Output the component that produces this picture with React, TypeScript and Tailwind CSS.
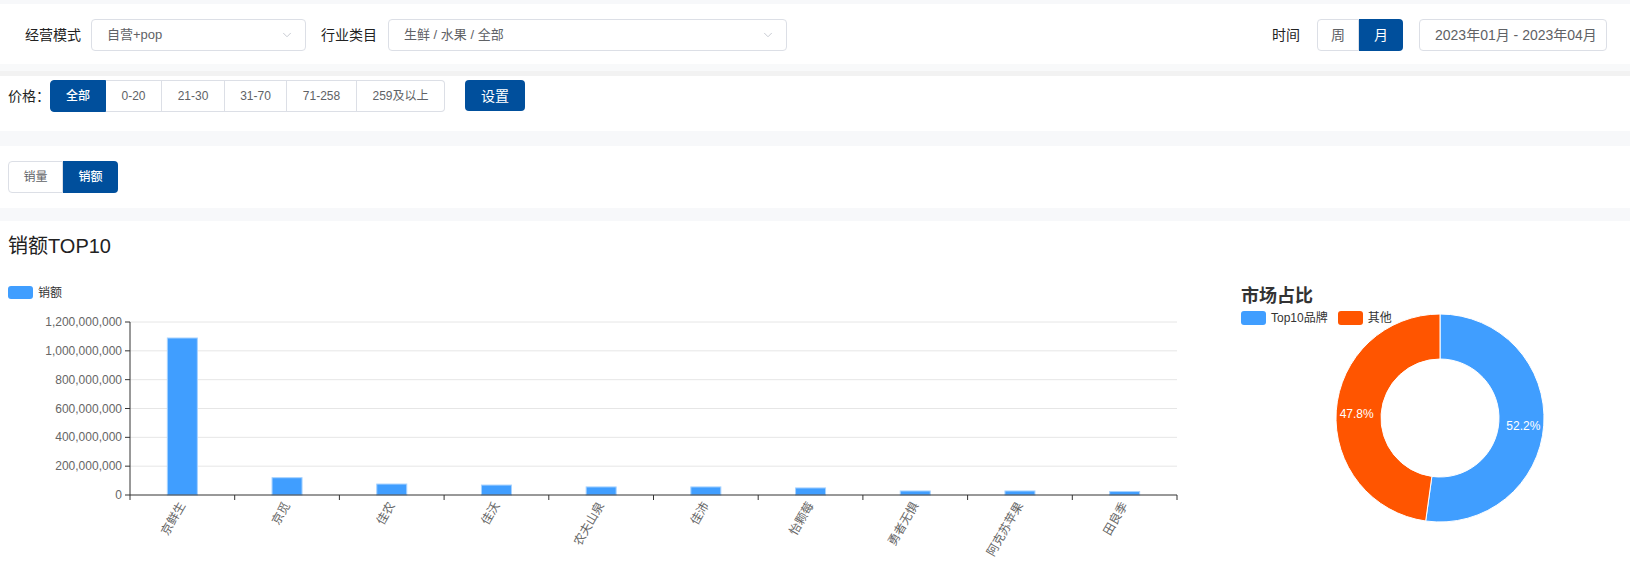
import { ChevronDown } from "lucide-react";

const brands: [string, number][] = [
  ["京鲜生", 1089e6],
  ["京觅", 120e6],
  ["佳农", 76e6],
  ["佳沃", 69e6],
  ["农夫山泉", 56e6],
  ["佳沛", 56e6],
  ["怡颗莓", 49e6],
  ["勇者无惧", 28e6],
  ["阿克苏苹果", 28e6],
  ["田良季", 24e6],
];

const priceRanges: [string, string][] = [
  ["全部", "w-[56px]"],
  ["0-20", "w-[56px]"],
  ["21-30", "w-[63px]"],
  ["31-70", "w-[62px]"],
  ["71-258", "w-[70px]"],
  ["259及以上", "w-[88px]"],
];

// bar chart geometry (svg coords)
const AX = 130;
const TOP = 62;
const ZERO = 235;
const MAX = 1.2e9;
const STEP = 104.7;
const BAR_W = 30;

function Select({ value, width }: { value: string; width: string }) {
  return (
    <div
      className={`${width} h-8 flex items-center justify-between pl-[15px] pr-[11px] border border-[#dcdfe6] rounded bg-white text-[13px] text-[#606266]`}
    >
      <span>{value}</span>
      <ChevronDown size={14} strokeWidth={1.5} className="text-[#c0c4cc]" />
    </div>
  );
}

function BarChart() {
  const ticks = [0, 1, 2, 3, 4, 5, 6];
  return (
    <svg width={1190} height={306} className="block shrink-0">
      <rect x={8} y={26} width={25} height={13} rx={3} fill="#409eff" />
      <text x={38} y={33} fontSize={12} fill="#333" dominantBaseline="central">
        销额
      </text>
      {ticks.map((i) => {
        const y = ZERO - (i * (ZERO - TOP)) / 6;
        return (
          <g key={i}>
            {i > 0 && <line x1={AX} x2={AX + STEP * 10} y1={y} y2={y} stroke="#e6e6e6" />}
            <line x1={AX - 5} x2={AX} y1={y} y2={y} stroke="#333" />
            <text
              x={AX - 8}
              y={y}
              fontSize={12}
              fill="#666"
              textAnchor="end"
              dominantBaseline="central"
            >
              {(i * 2e8).toLocaleString("en-US")}
            </text>
          </g>
        );
      })}
      {brands.map(([name, v], i) => {
        const h = (v / MAX) * (ZERO - TOP);
        const x = AX + i * STEP + (STEP - BAR_W) / 2;
        const cx = AX + i * STEP + STEP / 2;
        return (
          <g key={name}>
            <rect x={x} y={ZERO - h} width={BAR_W} height={h} fill="#409eff" stroke="#a6d2ff" strokeWidth={1} />
            <text
              x={cx}
              y={ZERO + 8}
              fontSize={12}
              fill="#666"
              textAnchor="end"
              dominantBaseline="central"
              transform={`rotate(-60 ${cx} ${ZERO + 8})`}
            >
              {name}
            </text>
          </g>
        );
      })}
      {Array.from({ length: 11 }).map((_, i) => (
        <line key={i} x1={AX + i * STEP} x2={AX + i * STEP} y1={ZERO} y2={ZERO + 5} stroke="#333" />
      ))}
      <line x1={AX} x2={AX} y1={TOP} y2={ZERO} stroke="#333" />
      <line x1={AX} x2={AX + STEP * 10} y1={ZERO} y2={ZERO} stroke="#333" />
    </svg>
  );
}

function pt(cx: number, cy: number, r: number, a: number) {
  const rad = (a * Math.PI) / 180;
  return [cx + r * Math.sin(rad), cy - r * Math.cos(rad)];
}

function arcPath(cx: number, cy: number, r0: number, r1: number, a0: number, a1: number) {
  const large = a1 - a0 > 180 ? 1 : 0;
  const [x0, y0] = pt(cx, cy, r1, a0);
  const [x1, y1] = pt(cx, cy, r1, a1);
  const [x2, y2] = pt(cx, cy, r0, a1);
  const [x3, y3] = pt(cx, cy, r0, a0);
  return `M${x0} ${y0} A${r1} ${r1} 0 ${large} 1 ${x1} ${y1} L${x2} ${y2} A${r0} ${r0} 0 ${large} 0 ${x3} ${y3} Z`;
}

function Donut() {
  const cx = 250;
  const cy = 93;
  const r0 = 59;
  const r1 = 104;
  const split = 0.522 * 360;
  const mid = (r0 + r1) / 2;
  const [bx, by] = pt(cx, cy, mid, split / 2);
  const [ox, oy] = pt(cx, cy, mid, (split + 360) / 2);
  return (
    <svg width={440} height={241} className="block overflow-visible">
      <path d={arcPath(cx, cy, r0, r1, 0, split)} fill="#409eff" stroke="#fff" strokeWidth={1} />
      <path d={arcPath(cx, cy, r0, r1, split, 360)} fill="#ff5500" stroke="#fff" strokeWidth={1} />
      <text x={bx + 2} y={by + 2} fontSize={12} fill="#fff" textAnchor="middle" dominantBaseline="central">
        52.2%
      </text>
      <text x={ox - 2} y={oy + 2} fontSize={12} fill="#fff" textAnchor="middle" dominantBaseline="central">
        47.8%
      </text>
    </svg>
  );
}

export default function App() {
  return (
    <div className="w-[1630px] h-[566px] overflow-hidden flex flex-col bg-[#f7f8fa] font-['Liberation_Sans','Noto_Sans_CJK_SC',sans-serif] text-[#333]">
      {/* filters */}
      <div className="mt-1 h-[60px] shrink-0 bg-white flex items-start pt-[15px] pl-[25px] pr-[23px]">
        <span className="text-sm leading-8 text-[#222]">经营模式</span>
        <div className="ml-[10px]">
          <Select value="自营+pop" width="w-[215px]" />
        </div>
        <span className="ml-[15px] text-sm leading-8 text-[#222]">行业类目</span>
        <div className="ml-[11px]">
          <Select value="生鲜 / 水果 / 全部" width="w-[399px]" />
        </div>
        <div className="ml-auto flex items-center">
          <span className="text-sm leading-8 text-[#222]">时间</span>
          <div className="ml-[17px] flex h-8 text-sm">
            <div className="w-[42px] flex items-center justify-center border border-[#dcdfe6] rounded-l text-[#606266]">
              周
            </div>
            <div className="w-11 flex items-center justify-center bg-[#004f9c] rounded-r text-white">月</div>
          </div>
          <div className="ml-4 w-[188px] h-8 flex items-center pl-[15px] border border-[#dcdfe6] rounded text-sm text-[#606266]">
            2023年01月 - 2023年04月
          </div>
        </div>
      </div>
      <div className="h-[7px] shrink-0 bg-[#f8f9fa]" />
      <div className="h-[5px] shrink-0 bg-[#f2f2f2]" />

      {/* price */}
      <div className="h-[55px] shrink-0 bg-white flex items-start pt-1 pl-2">
        <span className="w-[42px] text-sm leading-8 text-[#222]">价格：</span>
        <div className="flex h-8 text-xs">
          {priceRanges.map(([p, w], i) => (
            <div
              key={p}
              className={`${w} flex items-center justify-center border ${i > 0 ? "border-l-0" : ""} ${
                i === 0
                  ? "bg-[#004f9c] border-[#004f9c] text-white rounded-l font-medium"
                  : "border-[#dcdfe6] text-[#606266]"
              } ${i === priceRanges.length - 1 ? "rounded-r" : ""}`}
            >
              {p}
            </div>
          ))}
        </div>
        <div className="ml-5 w-[60px] h-[31px] flex items-center justify-center bg-[#004f9c] rounded text-sm text-white">
          设置
        </div>
      </div>
      <div className="h-[15px] shrink-0" />

      {/* metric toggle */}
      <div className="h-[62px] shrink-0 bg-white flex items-center pl-2">
        <div className="flex h-8 text-xs">
          <div className="w-[55px] flex items-center justify-center border border-[#dcdfe6] rounded-l text-[#606266]">
            销量
          </div>
          <div className="w-[55px] flex items-center justify-center bg-[#004f9c] rounded-r text-white font-medium">
            销额
          </div>
        </div>
      </div>
      <div className="h-[13px] shrink-0" />

      {/* charts */}
      <div className="flex-1 bg-white flex flex-col">
        <div className="pt-[11px] pl-2 h-[39px] text-xl leading-7 text-[#222]">销额TOP10</div>
        <div className="flex">
          <BarChart />
          <div className="w-[440px] flex flex-col">
            <div className="pl-[51px] pt-6">
              <div className="text-lg leading-6 font-bold text-[#333]">市场占比</div>
              <div className="mt-[3px] h-[14px] flex items-center text-xs text-[#333]">
                <span className="w-[25px] h-[14px] rounded-[3px] bg-[#409eff]" />
                <span className="ml-[5px]">Top10品牌</span>
                <span className="ml-[10px] w-[25px] h-[14px] rounded-[3px] bg-[#ff5500]" />
                <span className="ml-[5px]">其他</span>
              </div>
            </div>
            <Donut />
          </div>
        </div>
      </div>
    </div>
  );
}
